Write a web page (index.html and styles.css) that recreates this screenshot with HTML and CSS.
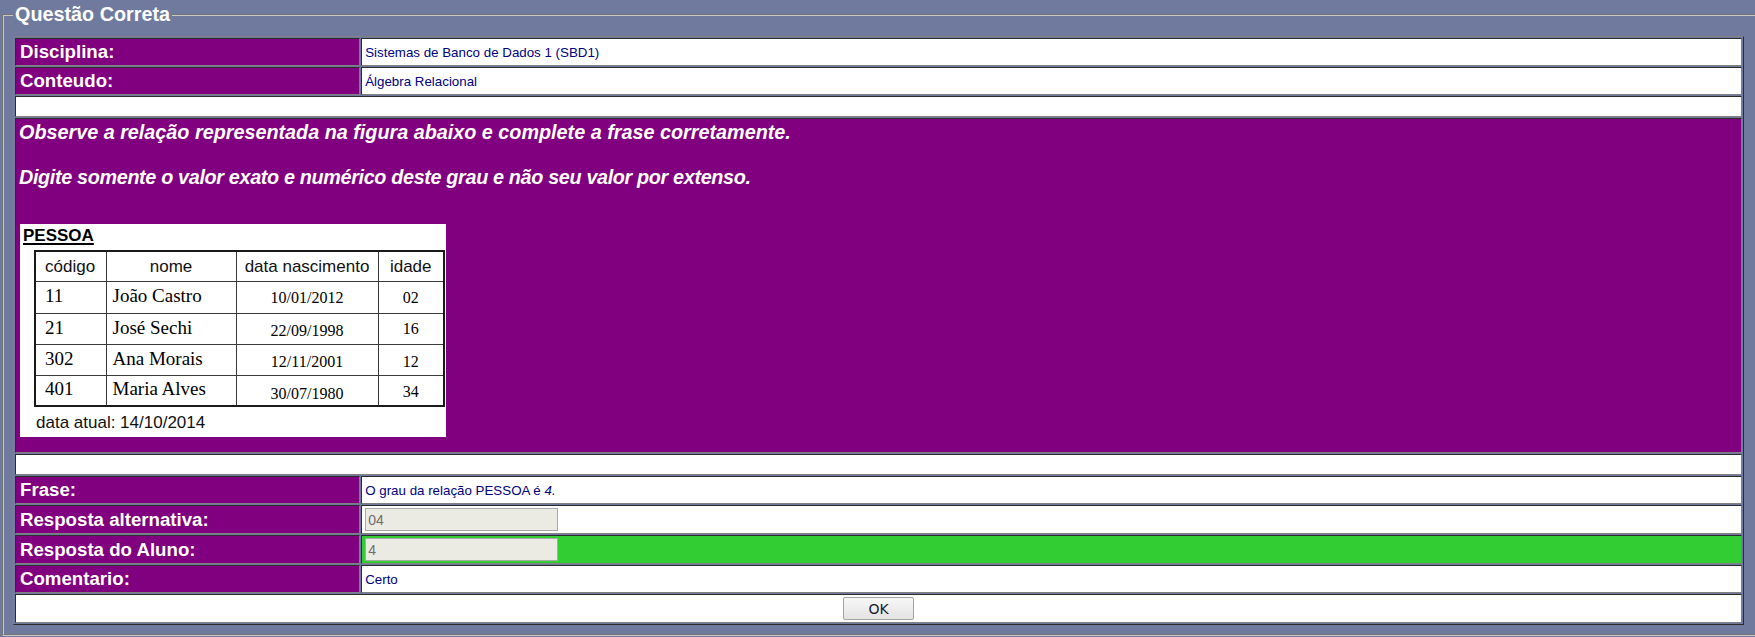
FILE: index.html
```html
<!DOCTYPE html>
<html lang="pt-BR">
<head>
<meta charset="utf-8">
<title>Questão Correta</title>
<link rel="stylesheet" href="styles.css">
</head>
<body>
<fieldset class="box">
  <legend class="box-title">Questão Correta</legend>
  <table class="form">
    <tr class="row">
      <td class="label">Disciplina:</td>
      <td class="value">Sistemas de Banco de Dados 1 (SBD1)</td>
    </tr>
    <tr class="row">
      <td class="label">Conteudo:</td>
      <td class="value">Álgebra Relacional</td>
    </tr>
    <tr class="row-empty"><td colspan="2" class="blank"></td></tr>
    <tr class="row-question">
      <td colspan="2" class="question">
        <p class="q-line">Observe a relação representada na figura abaixo e complete a frase corretamente.</p>
        <p class="q-line q-gap">Digite somente o valor exato e numérico deste grau e não seu valor por extenso.</p>
        <div class="figure">
          <div class="fig-title">PESSOA</div>
          <table class="fig-table">
            <colgroup>
              <col class="c1"><col class="c2"><col class="c3"><col class="c4">
            </colgroup>
            <tr class="fig-head">
              <th class="h-left">código</th>
              <th>nome</th>
              <th>data nascimento</th>
              <th>idade</th>
            </tr>
            <tr class="fig-row r1">
              <td class="d-code">11</td>
              <td class="d-name">João Castro</td>
              <td class="d-num">10/01/2012</td>
              <td class="d-num">02</td>
            </tr>
            <tr class="fig-row r2">
              <td class="d-code">21</td>
              <td class="d-name">José Sechi</td>
              <td class="d-num d-low">22/09/1998</td>
              <td class="d-num">16</td>
            </tr>
            <tr class="fig-row r3">
              <td class="d-code">302</td>
              <td class="d-name">Ana Morais</td>
              <td class="d-num d-low">12/11/2001</td>
              <td class="d-num d-low">12</td>
            </tr>
            <tr class="fig-row r4">
              <td class="d-code">401</td>
              <td class="d-name">Maria Alves</td>
              <td class="d-num d-lower">30/07/1980</td>
              <td class="d-num d-low">34</td>
            </tr>
          </table>
          <div class="fig-note">data atual: 14/10/2014</div>
        </div>
      </td>
    </tr>
    <tr class="row-empty"><td colspan="2" class="blank"></td></tr>
    <tr class="row">
      <td class="label">Frase:</td>
      <td class="value">O grau da relação PESSOA é <em>4.</em></td>
    </tr>
    <tr class="row-answer">
      <td class="label">Resposta alternativa:</td>
      <td class="value"><input class="answer-input" type="text" value="04" disabled></td>
    </tr>
    <tr class="row-answer">
      <td class="label">Resposta do Aluno:</td>
      <td class="value correct"><input class="answer-input" type="text" value="4" disabled></td>
    </tr>
    <tr class="row">
      <td class="label">Comentario:</td>
      <td class="value">Certo</td>
    </tr>
    <tr class="row-ok">
      <td colspan="2" class="actions"><button class="ok-button" type="button">OK</button></td>
    </tr>
  </table>
</fieldset>
</body>
</html>
```

FILE: styles.css
```css
html, body {
  margin: 0;
  padding: 0;
}

body {
  background: #6f7a9e;
  font-family: "Liberation Sans", Arial, sans-serif;
  overflow: hidden;
}

.box {
  margin: 3px 0 0 2px;
  border: 2px groove #c8c8c8;
  border-right: none;
  padding: 10px 11px 9px 9px;
  font-size: 12px;
}

.box-title {
  color: #ffffff;
  font-weight: bold;
  font-size: 19.8px;
  padding: 0 2px;
}

.form {
  width: 100%;
  border: 1px outset gray;
  border-spacing: 1px;
}

.form td {
  border: 1px inset gray;
  padding: 1px;
  box-sizing: border-box;
}

.row { height: 28px; }
.row-answer { height: 29px; }
.row-empty { height: 21px; }
.row-question { height: 335px; }
.row-ok { height: 29px; }

.form td.label {
  width: 20%;
  padding-left: 4px;
  background: #800080;
  color: #ffffff;
  font-weight: bold;
  font-size: 18.67px;
  vertical-align: middle;
  white-space: nowrap;
}

.form td.value {
  padding-left: 3px;
  background: #ffffff;
  color: #000080;
  font-size: 13.33px;
  vertical-align: middle;
}

.form td.value.correct {
  background: #32cd32;
}

.blank {
  background: #ffffff;
}

.form td.question {
  background: #800080;
  vertical-align: top;
  padding: 2px 1px 1px 3px;
}

.q-line {
  margin: 0;
  color: #ffffff;
  font-weight: bold;
  font-style: italic;
  font-size: 19.8px;
  line-height: 22.4px;
  white-space: nowrap;
}

.q-gap {
  margin-top: 22.4px;
  letter-spacing: -0.34px;
}

.figure {
  margin: 36px 0 0 1px;
  width: 426px;
  height: 213px;
  box-sizing: border-box;
  padding-top: 2px;
  background: #ffffff;
  color: #000000;
}

.fig-title {
  margin-left: 3px;
  font-weight: bold;
  font-size: 17px;
  line-height: 19.5px;
  text-decoration: underline;
  text-decoration-thickness: 2px;
  text-underline-offset: 2px;
}

.fig-table {
  margin: 4px 0 0 14px;
  width: 409px;
  table-layout: fixed;
  border-collapse: collapse;
  border: 2px solid #1a1a1a;
}

.c1 { width: 71px; }
.c2 { width: 130px; }
.c3 { width: 142px; }
.c4 { width: 66px; }

.fig-table th,
.fig-table td {
  border: 1px solid #3a3a3a;
  padding: 0;
  white-space: nowrap;
}

.fig-head { height: 31px; }
.fig-row.r1 { height: 32px; }
.fig-row.r2 { height: 31px; }
.fig-row.r3 { height: 31px; }
.fig-row.r4 { height: 30px; }

.fig-table th {
  font-family: "Liberation Sans", Arial, sans-serif;
  font-weight: normal;
  font-size: 17px;
  color: #111111;
  text-align: center;
  vertical-align: middle;
  padding-top: 2px;
}

.fig-table th.h-left {
  text-align: left;
  padding-left: 9px;
}

.fig-table td.d-code,
.fig-table td.d-name {
  font-family: "Liberation Serif", "Times New Roman", serif;
  font-size: 19px;
  text-align: left;
  vertical-align: middle;
  padding-bottom: 3px;
}

.fig-table td.d-code { padding-left: 9px; }
.fig-table td.d-name { padding-left: 6px; }

.fig-table td.d-num {
  font-family: "Liberation Serif", "Times New Roman", serif;
  font-size: 16px;
  text-align: center;
  vertical-align: middle;
}

.fig-table td.d-low { padding-top: 3px; }
.fig-table td.d-lower { padding-top: 7px; }

.fig-note {
  margin: 6px 0 0 16px;
  font-size: 17px;
  line-height: 19.5px;
  color: #111111;
}

.answer-input {
  display: block;
  margin: 0;
  width: 193px;
  height: 23px;
  box-sizing: border-box;
  border: 1px solid #a9a9a9;
  background: #ebebe4;
  color: #6d6d6d;
  font-family: "Liberation Sans", Arial, sans-serif;
  font-size: 14px;
  padding: 0 2px;
}

.actions {
  background: #ffffff;
  text-align: center;
  vertical-align: middle;
}

.ok-button {
  display: inline-block;
  vertical-align: middle;
  width: 71px;
  height: 23px;
  margin: 0;
  padding: 0;
  border: 1px solid #a3a3a3;
  border-radius: 2px;
  background: linear-gradient(#f7f7f7, #e3e3e3);
  color: #1a1a2e;
  font-family: "DejaVu Sans", "Liberation Sans", sans-serif;
  font-size: 14px;
}
```
